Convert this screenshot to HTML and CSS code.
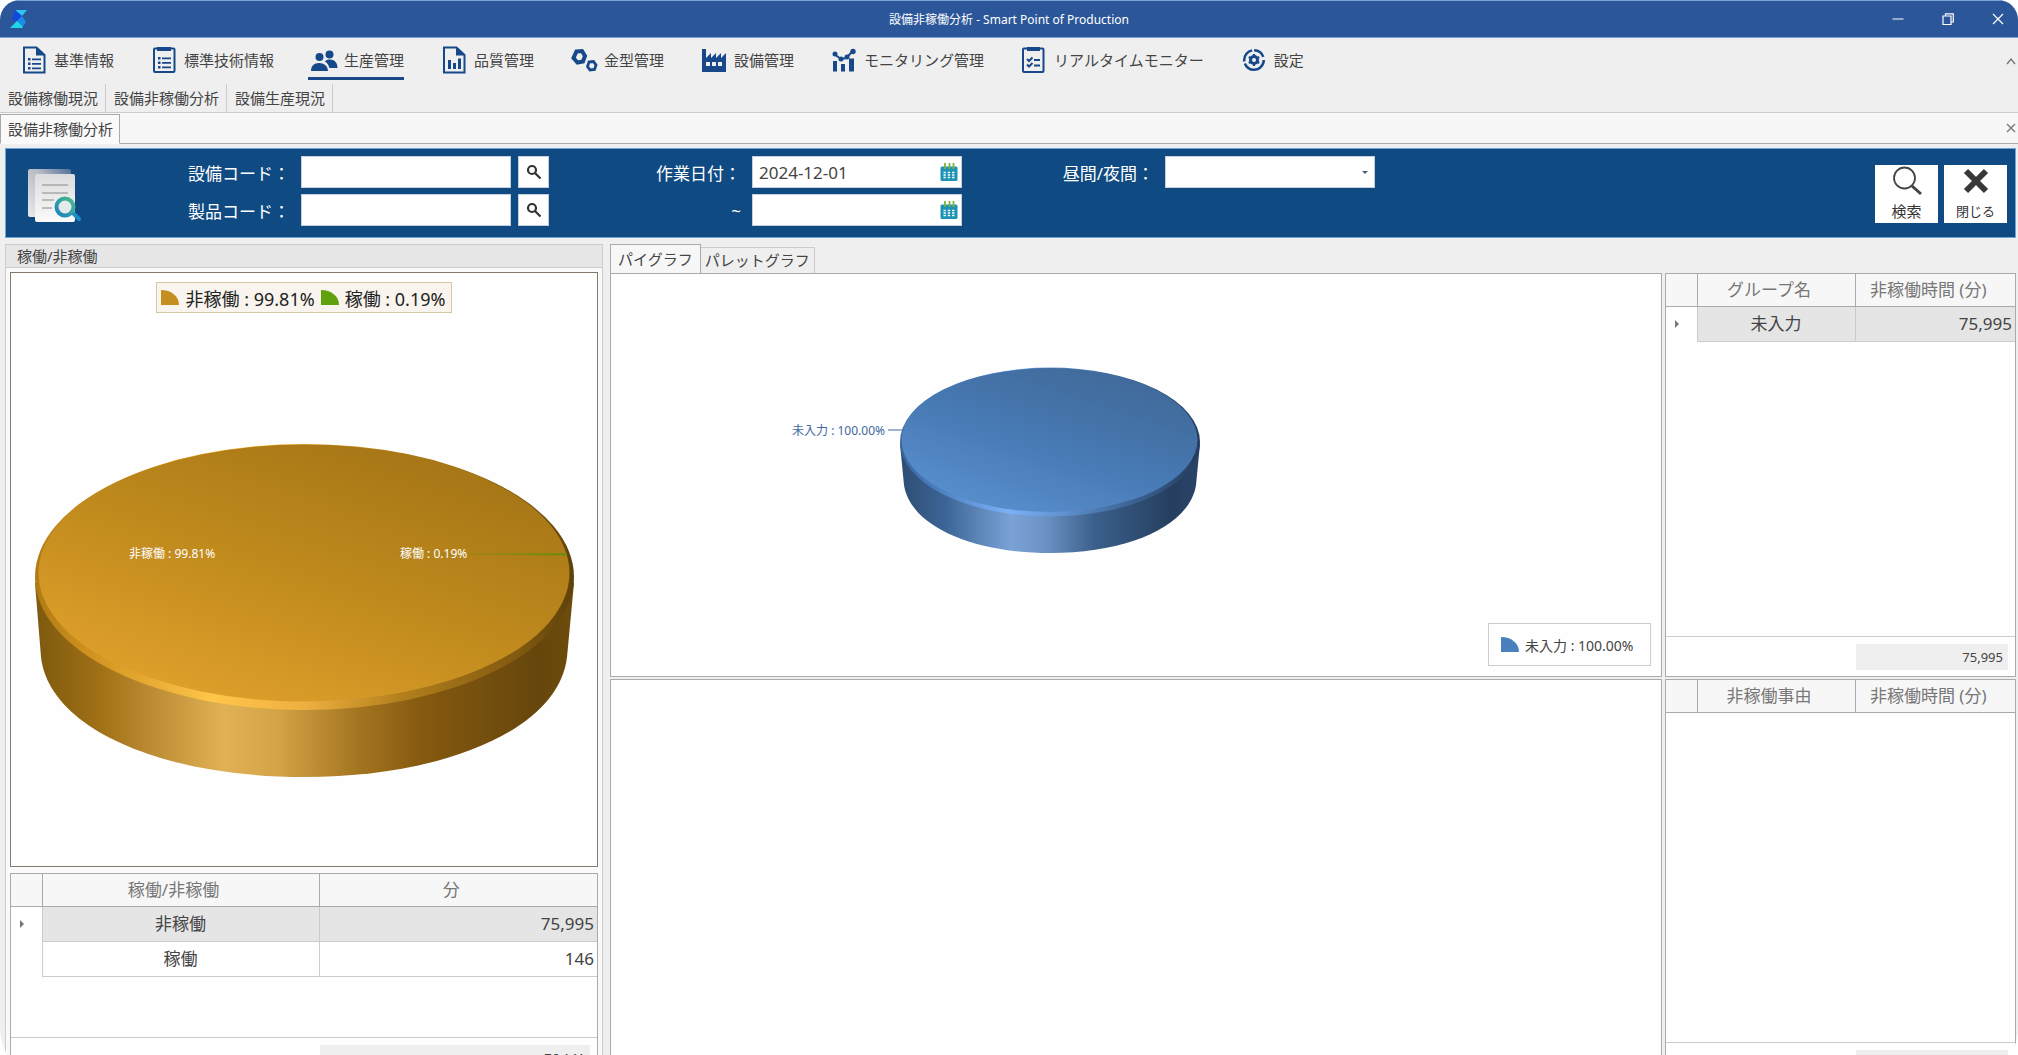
FILE: index.html
```html
<!DOCTYPE html>
<html lang="ja">
<head>
    <meta charset="UTF-8">
    <meta name="viewport" content="width=device-width, initial-scale=1.0">
    <title>設備非稼働分析 - Smart Point of Production</title>
    <link rel="stylesheet" href="styles.css">
</head>
<body>
<div class="window">

    <!-- Title bar -->
    <header class="titlebar">
        <svg class="logo" viewBox="0 0 18 20">
            <path d="M5 1h12l-5 6z" fill="#2ec4f5"/>
            <path d="M5 1l7 6-5 5-5-1z" fill="#1447e0"/>
            <path d="M12 7l4 6-4 6H8l-1-7z" fill="#1b8be8"/>
            <path d="M7 12l6 6-1 1H0z" fill="#1fd6e6"/>
        </svg>
        <h1>設備非稼働分析 - Smart Point of Production</h1>
        <div class="window-buttons">
            <button aria-label="最小化"><svg viewBox="0 0 12 12"><path d="M0.500 6h11"/></svg></button>
            <button aria-label="元に戻す"><svg viewBox="0 0 12 12"><path d="M1 3h8v8.500H1zM3.500 3V0.800H11.300V9H9"/></svg></button>
            <button aria-label="ウィンドウを閉じる"><svg viewBox="0 0 12 12"><path d="M1 1l10 10M11 1L1 11"/></svg></button>
        </div>
    </header>

    <!-- Main menu -->
    <nav class="menu">
        <a href="#"><svg viewBox="0 0 28 28"><path d="M4 1.500h12.500L24.500 9v17.500H4z" fill="none" stroke="#17498a" stroke-width="2"/><path d="M16 1v8.500h9z"/><path d="M8 12h2.500v2.500H8zM8 16.500h2.500V19H8zM8 21h2.500v2.500H8zM12 12.500h9v1.800h-9zM12 17h9v1.800h-9zM12 21.500h9v1.800h-9z"/></svg>基準情報</a>
        <a href="#"><svg viewBox="0 0 28 28"><rect x="4" y="2.500" width="20.500" height="23.500" rx="1" fill="none" stroke="#17498a" stroke-width="2"/><path d="M7 1h14v4H7zM8 11h2.500v2.500H8zM8 15.500h2.500V18H8zM8 20h2.500v2.500H8zM12 11.500h9v1.800h-9zM12 16h9v1.800h-9zM12 20.500h9v1.800h-9z"/></svg>標準技術情報</a>
        <a href="#" class="active"><svg viewBox="0 0 28 28"><circle cx="9.500" cy="11" r="4"/><circle cx="19.500" cy="8.500" r="4"/><path d="M1 25c0-5 3-8 8-8s9 3 9 8zM15 15.500c1-1.500 2.500-2 5-2 4.500 0 7.500 3 7.500 8.500h-8c-1-3-2-5-4.500-6.500z"/></svg>生産管理</a>
        <a href="#"><svg viewBox="0 0 28 28"><path d="M4 1.500h12.500L24.500 9v17.500H4z" fill="none" stroke="#17498a" stroke-width="2"/><path d="M16 1v8.500h9zM8 14h3v9H8zM13 17h3v6h-3zM18 12.500h3V23h-3z"/></svg>品質管理</a>
        <a href="#"><svg viewBox="0 0 28 28"><path d="M6.500 5.500l5.500-.500 3 5-2 5.500-5.500 1-4-4.500z" fill="none" stroke="#17498a" stroke-width="4"/><path d="M19 16l4.500-.500 2.500 3.500-1.500 4.500-4.500.500-2.500-3.500z" fill="none" stroke="#17498a" stroke-width="2.800"/></svg>金型管理</a>
        <a href="#"><svg viewBox="0 0 28 28"><path fill-rule="evenodd" d="M2 3h4v9l5-5v5l5-5v5l5-5v5l5-5v19H2zM6 16v4h4v-4zM12 16v4h4v-4zM18 16v4h4v-4z"/></svg>設備管理</a>
        <a href="#"><svg viewBox="0 0 28 28"><path d="M4 8l7 5 5-1 7-7" fill="none" stroke="#17498a" stroke-width="2"/><circle cx="5" cy="8" r="2.500"/><circle cx="11" cy="13" r="2.500"/><circle cx="17" cy="11" r="2.500"/><circle cx="23" cy="5.500" r="2.700"/><path d="M3 15h4v10.500H3zM11 18h4v7.500h-4zM19 12.500h5v13h-5z"/></svg>モニタリング管理</a>
        <a href="#"><svg viewBox="0 0 28 28"><rect x="3" y="2.500" width="20.500" height="23.500" rx="1" fill="none" stroke="#17498a" stroke-width="2"/><path d="M7 1h13v4H7zM14 13h6v2h-6zM14 18.500h6v2h-6z"/><path d="M7 13l2 2 3.500-3.500M7 18.500l2 2 3.500-3.500" fill="none" stroke="#17498a" stroke-width="2"/></svg>リアルタイムモニター</a>
        <a href="#"><svg viewBox="0 0 28 28"><circle cx="14" cy="14" r="9.800" fill="none" stroke="#17498a" stroke-width="2.500" stroke-dasharray="27 2 15 2 12 3.500"/><circle cx="14" cy="14" r="3.500" fill="none" stroke="#17498a" stroke-width="3"/><path d="M14 8v12M8.800 11l10.400 6M19.200 11L8.800 17" fill="none" stroke="#17498a" stroke-width="2.200"/><circle cx="14" cy="14" r="2" fill="#efefef"/></svg>設定</a>
        <button class="collapse" aria-label="リボンを折りたたむ"><svg viewBox="0 0 10 8"><path d="M1 7l4-5 4 5"/></svg></button>
    </nav>
    <nav class="submenu">
        <a href="#">設備稼働現況</a>
        <a href="#">設備非稼働分析</a>
        <a href="#">設備生産現況</a>
    </nav>

    <!-- Open documents -->
    <div class="doc-tabs">
        <button class="doc-tab">設備非稼働分析</button>
        <button class="collapse" aria-label="タブを閉じる"><svg viewBox="0 0 10 10"><path d="M1 1l8 8M9 1L1 9"/></svg></button>
    </div>

    <!-- Search conditions -->
    <form class="filter">
        <svg class="filter-icon" viewBox="0 0 60 60">
            <defs>
                <linearGradient id="paperBack" x1="0" y1="1" x2="1" y2="0"><stop offset="0" stop-color="#e9ebee"/><stop offset="0.600" stop-color="#b4bac2"/><stop offset="1" stop-color="#4f6f99"/></linearGradient>
                <linearGradient id="paper" x1="0" y1="0" x2="0" y2="1"><stop offset="0" stop-color="#dcdcde"/><stop offset="1" stop-color="#fafafa"/></linearGradient>
                <linearGradient id="lens" x1="0" y1="1" x2="1" y2="0"><stop offset="0" stop-color="#1683c4"/><stop offset="1" stop-color="#4dbb8a"/></linearGradient>
            </defs>
            <rect x="5" y="3" width="43" height="48" rx="2" fill="url(#paperBack)"/>
            <rect x="12" y="8" width="40" height="48" rx="2" fill="url(#paper)"/>
            <path d="M19 19h26M19 27h26M19 34h12M19 42h10" stroke="#a9a9ab" stroke-width="1.500"/>
            <path d="M49 46l7 7" stroke="#1c8cc6" stroke-width="4" stroke-linecap="round"/>
            <circle cx="42" cy="41" r="8.500" fill="#e4eaea" stroke="url(#lens)" stroke-width="4"/>
        </svg>
        <div class="fields">
            <div class="field">
                <label for="equipmentCode">設備コード：</label>
                <input id="equipmentCode" class="box" type="text">
                <button type="button" class="lookup" aria-label="設備コード検索"><svg viewBox="0 0 16 16"><circle cx="6" cy="6" r="4"/><path d="M9 9l5.500 5.500"/></svg></button>
            </div>
            <div class="field">
                <label for="productCode">製品コード：</label>
                <input id="productCode" class="box" type="text">
                <button type="button" class="lookup" aria-label="製品コード検索"><svg viewBox="0 0 16 16"><circle cx="6" cy="6" r="4"/><path d="M9 9l5.500 5.500"/></svg></button>
            </div>
        </div>
        <div class="fields">
            <div class="field">
                <label for="dateFrom">作業日付：</label>
                <span class="box date">
                    <input id="dateFrom" type="text" value="2024-12-01">
                    <button type="button" aria-label="カレンダー"><svg viewBox="0 0 18 18"><rect x="0.500" y="3.500" width="17" height="14.500" rx="1.500" fill="#1d93b5"/><path d="M5 0v6M9.500 0v6M13.500 0v6" stroke="#7cb342" stroke-width="1.800"/><path d="M3.500 9.500h11M3.500 12h11M3.500 14.500h11" stroke="#fff" stroke-width="1.600" stroke-dasharray="2.300 2"/></svg></button>
                </span>
            </div>
            <div class="field">
                <label for="dateTo">~</label>
                <span class="box date">
                    <input id="dateTo" type="text">
                    <button type="button" aria-label="カレンダー"><svg viewBox="0 0 18 18"><rect x="0.500" y="3.500" width="17" height="14.500" rx="1.500" fill="#1d93b5"/><path d="M5 0v6M9.500 0v6M13.500 0v6" stroke="#7cb342" stroke-width="1.800"/><path d="M3.500 9.500h11M3.500 12h11M3.500 14.500h11" stroke="#fff" stroke-width="1.600" stroke-dasharray="2.300 2"/></svg></button>
                </span>
            </div>
        </div>
        <div class="fields">
            <div class="field">
                <label for="shift">昼間/夜間：</label>
                <span class="select-wrap">
                    <select id="shift" class="box"><option></option></select>
                </span>
            </div>
        </div>
        <div class="actions">
            <button type="button" class="action">
                <svg viewBox="0 0 32 32"><circle cx="13.500" cy="13" r="10.500" fill="none" stroke="#444" stroke-width="1.800"/><path d="M21 21l9 8" stroke="#444" stroke-width="3"/></svg>
                検索
            </button>
            <button type="button" class="action">
                <svg viewBox="0 0 32 32"><path d="M6 6l20 20M26 6L6 26" stroke="#383838" stroke-width="6"/></svg>
                <small>閉じる</small>
            </button>
        </div>
    </form>

    <main class="content">

        <!-- Operating ratio -->
        <section class="ratio">
            <h2>稼働/非稼働</h2>
            <div class="ratio-body">
                <div class="chart-frame">
                    <div class="legend legend-top">
                        <svg viewBox="0 0 18 15"><path d="M0 0c10 0 18 6 18 15H0z" fill="#c68e1e"/></svg>非稼働 : 99.81%
                        <svg viewBox="0 0 18 15"><path d="M0 0c10 0 18 6 18 15H0z" fill="#61a10d"/></svg>稼働 : 0.19%
                    </div>
                    <svg class="pie" viewBox="0 0 586 334">
                        <defs>
                            <linearGradient id="goldTop" x1="0.200" y1="0.900" x2="0.750" y2="0.100"><stop offset="0" stop-color="#dd9f2a"/><stop offset="0.500" stop-color="#c08a1d"/><stop offset="1" stop-color="#a87817"/></linearGradient>
                            <linearGradient id="goldSide"><stop offset="0" stop-color="#7d590e"/><stop offset="0.120" stop-color="#a07016"/><stop offset="0.220" stop-color="#bd8c34"/><stop offset="0.350" stop-color="#e0b155"/><stop offset="0.450" stop-color="#d3a347"/><stop offset="0.600" stop-color="#a47520"/><stop offset="0.720" stop-color="#85590f"/><stop offset="0.930" stop-color="#66460c"/><stop offset="1" stop-color="#6d4c0c"/></linearGradient>
                            <linearGradient id="goldRim"><stop offset="0" stop-color="#b07a14"/><stop offset="0.100" stop-color="#d0921f"/><stop offset="0.330" stop-color="#ffc64a"/><stop offset="0.500" stop-color="#eeb040"/><stop offset="0.680" stop-color="#b27f1c"/><stop offset="0.900" stop-color="#81590f"/><stop offset="1" stop-color="#5e410b"/></linearGradient>
                            <linearGradient id="greenSlice"><stop offset="0" stop-color="#8c8a14" stop-opacity="0.100"/><stop offset="1" stop-color="#6f8a0c"/></linearGradient>
                        </defs>
                        <path d="M24 139L30 213C38 285 152 333 293 333S548 285 556 213L563 139z" fill="url(#goldSide)"/>
                        <ellipse cx="293.500" cy="133" rx="269.500" ry="133" fill="url(#goldRim)"/>
                        <ellipse cx="293" cy="129" rx="265.500" ry="128.500" fill="url(#goldTop)"/>
                        <path d="M364 110L556 109V111.500z" fill="url(#greenSlice)"/>
                        <g class="pie-label">
                            <text x="118" y="114">非稼働 : 99.81%</text>
                            <text x="389" y="114">稼働 : 0.19%</text>
                        </g>
                    </svg>
                </div>
                <div class="grid-panel ratio-grid">
                    <table class="grid">
                        <thead>
                            <tr><th class="mark"></th><th class="half">稼働/非稼働</th><th>分</th></tr>
                        </thead>
                        <tbody>
                            <tr class="selected"><td class="mark"></td><td>非稼働</td><td class="num">75,995</td></tr>
                            <tr><td class="mark"></td><td>稼働</td><td class="num">146</td></tr>
                        </tbody>
                    </table>
                    <div class="grid-footer"><output>76,141</output></div>
                </div>
            </div>
        </section>

        <!-- Down time by group and reason -->
        <section class="analysis">
            <div class="chart-tabs">
                <button class="chart-tab current">パイグラフ</button>
                <button class="chart-tab">パレットグラフ</button>
            </div>
            <div class="panels">
                <div class="panel">
                    <svg class="group-pie" viewBox="0 0 420 188">
                        <defs>
                            <linearGradient id="blueTop" x1="0.200" y1="0.900" x2="0.750" y2="0.100"><stop offset="0" stop-color="#588dcc"/><stop offset="0.500" stop-color="#4779b3"/><stop offset="1" stop-color="#416b9c"/></linearGradient>
                            <linearGradient id="blueSide"><stop offset="0" stop-color="#2d4c73"/><stop offset="0.150" stop-color="#3c6597"/><stop offset="0.370" stop-color="#7aa2d6"/><stop offset="0.480" stop-color="#6c93c4"/><stop offset="0.650" stop-color="#3b5f8c"/><stop offset="0.900" stop-color="#263f60"/><stop offset="1" stop-color="#2a4468"/></linearGradient>
                            <linearGradient id="blueRim"><stop offset="0" stop-color="#3a659b"/><stop offset="0.120" stop-color="#4a7dbd"/><stop offset="0.360" stop-color="#7db1f7"/><stop offset="0.550" stop-color="#5f90cf"/><stop offset="0.750" stop-color="#3f6799"/><stop offset="1" stop-color="#243c5c"/></linearGradient>
                        </defs>
                        <path d="M110 77L114 118C120 158 180 186 260 186S400 158 406 118L410 77z" fill="url(#blueSide)"/>
                        <ellipse cx="260" cy="75" rx="150" ry="74.500" fill="url(#blueRim)"/>
                        <ellipse cx="259.500" cy="73" rx="148" ry="72" fill="url(#blueTop)"/>
                        <path d="M98 63H113" stroke="#3c69a0"/>
                        <text class="leader-label" x="95" y="68" text-anchor="end">未入力 : 100.00%</text>
                    </svg>
                    <div class="legend legend-corner">
                        <svg viewBox="0 0 18 15"><path d="M0 0c10 0 18 6 18 15H0z" fill="#4a80be"/></svg>未入力 : 100.00%
                    </div>
                </div>
                <div class="grid-panel">
                    <table class="grid">
                        <thead>
                            <tr><th class="mark"></th><th class="name">グループ名</th><th>非稼働時間 (分)</th></tr>
                        </thead>
                        <tbody>
                            <tr class="selected"><td class="mark"></td><td>未入力</td><td class="num">75,995</td></tr>
                        </tbody>
                    </table>
                    <div class="grid-footer"><output>75,995</output></div>
                </div>
                <div class="panel"></div>
                <div class="grid-panel">
                    <table class="grid">
                        <thead>
                            <tr><th class="mark"></th><th class="name">非稼働事由</th><th>非稼働時間 (分)</th></tr>
                        </thead>
                    </table>
                    <div class="grid-footer"><output></output></div>
                </div>
            </div>
        </section>
    </main>
</div>
</body>
</html>
```
FILE: styles.css
```css
* {
    box-sizing: border-box;
}

body {
    margin: 0;
    height: 100vh;
    overflow: hidden;
    background-color: #fff;
    font-family: "Noto Sans", "Noto Sans CJK JP", sans-serif;
    font-size: 15px;
    color: #444;
}

button, input, select {
    font: inherit;
    color: inherit;
    border: 0;
    border-radius: 0;
    padding: 0;
    background: none;
    outline: none;
}

a {
    color: inherit;
    text-decoration: none;
}

/* the window runs a little past the bottom of the screen */
.window {
    display: flex;
    flex-direction: column;
    height: calc(100vh + 28px);
    border-radius: 20px 20px 56px 56px;
    overflow: hidden;
    background-color: #efefef;
}

/* Title bar */
.titlebar {
    display: flex;
    align-items: center;
    justify-content: space-between;
    flex: none;
    height: 38px;
    padding: 0 14px 0 10px;
    border-top: 1px solid #7ba3d6;
    border-bottom: 1px solid #7ba3d6;
    background-color: #2b579a;
    color: #fff;
}

.titlebar h1 {
    margin: 0;
    font-size: 12px;
    font-weight: normal;
}

.logo {
    width: 18px;
    height: 20px;
    margin-right: 98px;
}

.window-buttons {
    display: flex;
    gap: 38px;
}

.window-buttons svg {
    display: block;
    width: 12px;
    height: 12px;
    fill: none;
    stroke: #fff;
    stroke-width: 1.2;
}

/* Menu */
.menu {
    display: flex;
    gap: 34px;
    flex: none;
    height: 46px;
    padding: 4px 0 4px 18px;
}

.menu a {
    display: flex;
    align-items: center;
    gap: 6px;
    padding-left: 2px;
    border-bottom: 3px solid transparent;
    white-space: nowrap;
}

.menu a.active {
    border-bottom-color: #17498a;
}

.menu a svg {
    width: 28px;
    height: 28px;
    fill: #17498a;
}

.collapse {
    margin-left: auto;
    padding-right: 2px;
}

.collapse svg {
    display: block;
    width: 10px;
    height: 10px;
    fill: none;
    stroke: #777;
    stroke-width: 1.4;
}

.submenu {
    display: flex;
    flex: none;
    height: 29px;
    border-bottom: 1px solid #ccc;
}

.submenu a {
    padding: 0 7px 0 8px;
    border-right: 1px solid #ccc;
    line-height: 28px;
}

.doc-tabs {
    display: flex;
    flex: none;
    height: 31px;
    border-bottom: 1px solid #aaa;
    background-color: #f7f7f7;
}

.doc-tab {
    margin: 1px 0 -1px;
    padding: 0 6px 2px 7px;
    border: 1px solid #aaa;
    border-bottom-color: #fafafa;
    background-color: #fafafa;
}

/* Search conditions */
.filter {
    display: flex;
    flex: none;
    gap: 90px;
    margin: 4px 2px 0 5px;
    height: 90px;
    padding: 7px 8px 0 17px;
    border: 1px solid #6ba5d8;
    background-color: #0f4a82;
    font-size: 17px;
    color: #fff;
}

.filter-icon {
    width: 60px;
    height: 60px;
    margin: 10px 15px 0 0;
}

.fields {
    display: flex;
    flex-direction: column;
    gap: 6px;
}

.field {
    display: flex;
    align-items: center;
    height: 32px;
}

.field label {
    width: 102px;
    margin-right: 11px;
    text-align: right;
    white-space: nowrap;
}

.box {
    display: block;
    width: 210px;
    height: 32px;
    padding: 0 6px;
    border: 1px solid #c5cfda;
    background-color: #fff;
    color: #444;
}

.date {
    display: flex;
    align-items: center;
    padding-right: 3px;
}

.date input {
    flex: 1;
    min-width: 0;
}

.date svg {
    display: block;
    width: 18px;
    height: 18px;
}

.lookup {
    width: 31px;
    height: 32px;
    margin-left: 7px;
    border: 1px solid #c5cfda;
    background-color: #fff;
}

.lookup svg {
    display: block;
    width: 16px;
    height: 16px;
    margin: auto;
    fill: none;
    stroke: #333;
    stroke-width: 2.2;
}

.select-wrap {
    position: relative;
}

.select-wrap select {
    appearance: none;
}

.select-wrap::after {
    content: "";
    position: absolute;
    top: 15px;
    right: 7px;
    border: 3px solid transparent;
    border-top-color: #4a6078;
    pointer-events: none;
}

.actions {
    display: flex;
    gap: 6px;
    margin: 9px 0 0 auto;
}

.action {
    display: flex;
    flex-direction: column;
    align-items: center;
    justify-content: space-between;
    width: 63px;
    height: 58px;
    background-color: #fff;
    color: #333;
    font-size: 15px;
    line-height: 24px;
}

.action svg {
    width: 32px;
    height: 32px;
}

.action small {
    font-size: 13px;
}

/* Content */
.content {
    display: grid;
    grid-template-columns: 598px 1fr;
    gap: 7px;
    flex: 1;
    min-height: 0;
    padding: 6px 2px 0 5px;
}

.ratio {
    display: flex;
    flex-direction: column;
    min-height: 0;
    border: 1px solid #ccc;
}

.ratio h2 {
    margin: 0;
    padding-left: 11px;
    border-bottom: 1px solid #ccc;
    background-color: #e6e6e6;
    font-size: 15px;
    font-weight: normal;
    line-height: 22px;
}

.ratio-body {
    display: flex;
    flex-direction: column;
    gap: 6px;
    flex: 1;
    min-height: 0;
    padding: 4px;
    background-color: #fafafa;
}

.chart-frame {
    display: flex;
    flex-direction: column;
    align-items: center;
    flex: 1;
    min-height: 0;
    padding-top: 9px;
    border: 1px solid #85786c;
    background-color: #fefefe;
}

.legend {
    display: flex;
    align-items: center;
    gap: 6px;
    white-space: nowrap;
}

.legend svg {
    width: 18px;
    height: 15px;
}

.legend-top {
    height: 31px;
    margin-bottom: 42px;
    padding: 0 5px 0 4px;
    border: 1px solid #d8c6a4;
    background-color: #f9f5ee;
    font-size: 18px;
    color: #222;
}

.pie {
    width: 100%;
    margin: auto 0;
}

.pie-label {
    fill: #fff;
    font-size: 12px;
}

/* Grids */
.grid-panel {
    display: flex;
    flex-direction: column;
    min-height: 0;
    border: 1px solid #aaa;
    background-color: #fefefe;
}

.ratio-grid {
    flex: none;
    height: 205px;
}

.grid {
    width: 100%;
    table-layout: fixed;
    border-collapse: collapse;
    font-size: 17px;
    line-height: 24px;
    text-align: center;
}

.grid th {
    height: 32px;
    padding: 0 14px 0 0;
    border-bottom: 1px solid #aaa;
    border-right: 1px solid #aaa;
    background-color: #f7f7f7;
    font-weight: normal;
    color: #777;
}

.grid td {
    height: 35px;
    padding: 0 3px;
    border: 1px solid #ccc;
}

.grid th:last-child, .grid td:last-child {
    border-right: 0;
}

.grid .mark {
    width: 31px;
}

.grid .half {
    width: 277px;
}

.grid .name {
    width: 158px;
}

.grid td.mark {
    border-left: 0;
    border-bottom: 0;
    border-top: 0;
}

.grid .num {
    text-align: right;
}

.selected td {
    background-color: #e5e5e5;
}

.selected td.mark {
    background-color: transparent;
}

.selected td.mark::before {
    content: "";
    display: block;
    width: 4px;
    margin-left: 6px;
    border: 4px solid transparent;
    border-left-color: #777;
    border-right: 0;
}

.grid-footer {
    margin-top: auto;
    padding: 7px 7px 6px 0;
    border-top: 1px solid #ccc;
}

.grid-footer output {
    display: block;
    width: 152px;
    height: 26px;
    margin-left: auto;
    padding-right: 5px;
    background-color: #efefef;
    font-size: 13px;
    line-height: 26px;
    text-align: right;
}

.ratio-grid output {
    width: 270px;
}

/* Analysis */
.analysis {
    display: flex;
    flex-direction: column;
    min-width: 0;
    min-height: 0;
}

.chart-tabs {
    display: flex;
    align-items: flex-end;
    height: 29px;
}

.chart-tab {
    height: 26px;
    padding: 0 4px 2px;
    border: 1px solid #ccc;
    border-left: 0;
    border-bottom: 0;
}

.chart-tab.current {
    height: 29px;
    padding: 0 7px 2px;
    border: 1px solid #aaa;
    border-bottom: 0;
    background-color: #f7f7f7;
}

.panels {
    display: grid;
    grid-template-columns: 1fr 351px;
    grid-template-rows: 1fr 1fr;
    gap: 2px 3px;
    flex: 1;
    min-height: 0;
}

.panel {
    display: flex;
    flex-direction: column;
    min-height: 0;
    border: 1px solid #aaa;
    background-color: #fefefe;
}

/* the disc is centred in the space left of the legend */
.group-pie {
    width: 420px;
    height: 188px;
    margin: 93px 0 0 calc(50% - 346px);
}

.leader-label {
    fill: #3c69a0;
    font-size: 12px;
}

.legend-corner {
    width: 163px;
    height: 43px;
    margin: auto 10px 10px auto;
    padding-left: 12px;
    border: 1px solid #ccc;
    font-size: 14px;
}
```
